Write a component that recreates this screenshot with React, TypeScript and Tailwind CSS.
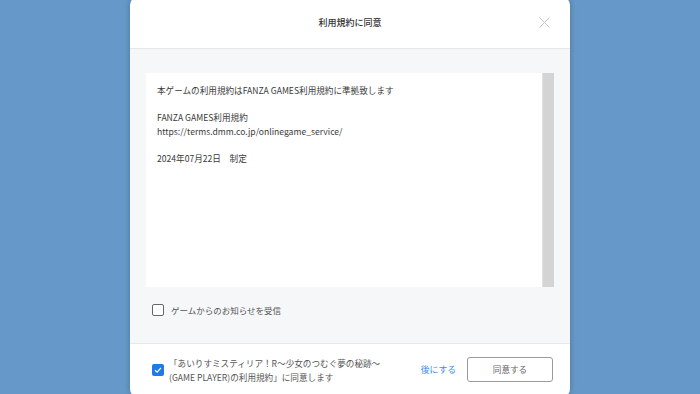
import React from 'react';

const font = { fontFamily: '"Noto Sans CJK JP", "Noto Sans", sans-serif' };

export default function App() {
  return (
    <div
      className="w-full h-[394px] bg-[#6699c9] flex justify-center overflow-hidden"
      style={font}
    >
      <div className="w-[440px] h-[400px] mt-[-3px] bg-white rounded-lg flex flex-col overflow-hidden shadow-[0_0_6px_rgba(0,0,0,0.25)]">
        <div className="relative h-[52px] shrink-0 flex items-center justify-center border-b border-[#e4e7eb]">
          <span className="text-[9px] font-medium text-[#333]">利用規約に同意</span>
          <button className="absolute right-[20px] top-[20px] text-[#c4c4c4]">
            <svg width="11" height="11" viewBox="0 0 11 11">
              <path d="M0.5 0.5 L10.5 10.5 M10.5 0.5 L0.5 10.5" stroke="currentColor" strokeWidth="1" />
            </svg>
          </button>
        </div>

        <div className="bg-[#f6f7f9] px-4 pt-[24px] h-[294px] shrink-0 flex flex-col">
          <div className="h-[214px] bg-white flex">
            <div className="flex-1 pl-[11px] pt-[11px] text-[8.6px] leading-[13.5px] text-[#3a3a3a]">
              <p>本ゲームの利用規約はFANZA GAMES利用規約に準拠致します</p>
              <p>&nbsp;</p>
              <p>FANZA GAMES利用規約</p>
              <p>https://terms.dmm.co.jp/onlinegame_service/</p>
              <p>&nbsp;</p>
              <p>2024年07月22日　制定</p>
            </div>
            <div className="w-[12px] bg-[#d4d4d4] border-l border-[#e2e2e2]" />
          </div>
          <label className="flex items-center gap-[7px] pl-[6px] mt-[17px]">
            <span className="w-[12px] h-[12px] rounded-[2px] border border-[#666] bg-white" />
            <span className="text-[8.5px] text-[#555]">ゲームからのお知らせを受信</span>
          </label>
        </div>

        <div className="flex-1 border-t border-[#e6e8eb] flex items-center pl-[22px] pr-[17px] pb-[2px]">
          <span className="w-[12px] h-[12px] rounded-[2px] bg-[#1f7ae8] flex items-center justify-center shrink-0">
            <svg width="8" height="8" viewBox="0 0 8 8">
              <path d="M1 4.2 L3.1 6.2 L7 1.8" stroke="white" strokeWidth="1.2" fill="none" />
            </svg>
          </span>
          <div className="ml-[5px] text-[8.6px] leading-[14px] text-[#555] flex-1">
            <p>「あいりすミスティリア！R～少女のつむぐ夢の秘跡～</p>
            <p>(GAME PLAYER)の利用規約」に同意します</p>
          </div>
          <span className="text-[8.8px] text-[#3a8ee6] mr-[11px]">後にする</span>
          <button className="w-[86px] h-[25px] border border-[#999] rounded-[3px] text-[8.6px] text-[#666] bg-white">
            同意する
          </button>
        </div>
      </div>
    </div>
  );
}
